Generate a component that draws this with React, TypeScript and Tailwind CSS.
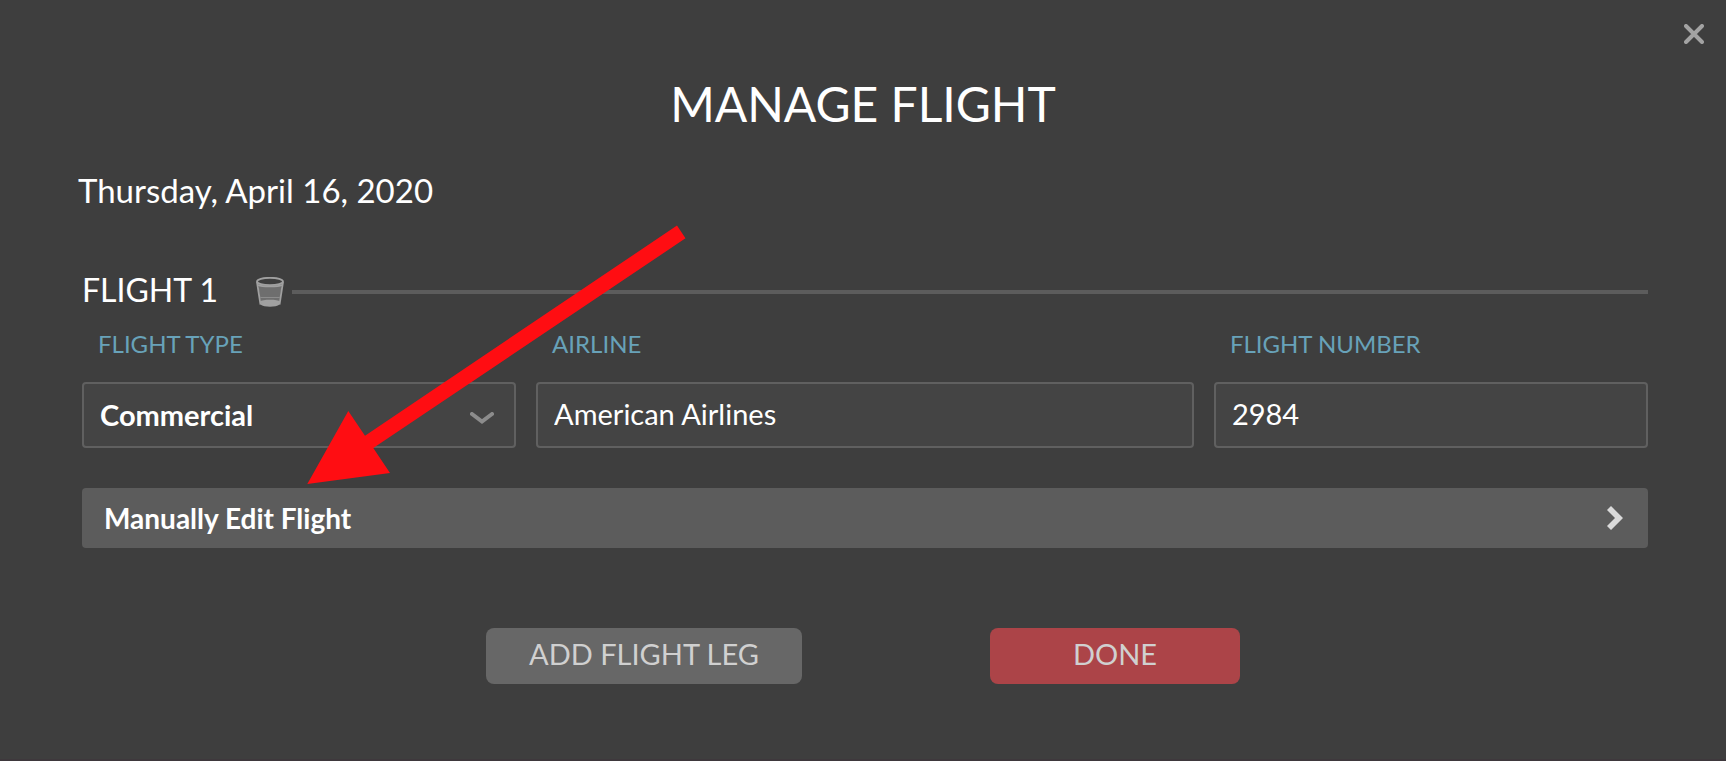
import React, { useState } from 'react';

const fieldClass =
  'h-[66px] w-full rounded border-2 border-[#606060] bg-[#444444] px-4 text-[29px] text-white outline-none';

interface FieldProps {
  id: string;
  label: string;
  children: React.ReactNode;
}

const Field: React.FC<FieldProps> = ({ id, label, children }) => (
  <div className="min-w-0">
    <label htmlFor={id} className="block pl-4 text-[24px] leading-9 text-[#68a2b9]">
      {label}
    </label>
    <div className="relative mt-5">{children}</div>
  </div>
);

const TrashIcon: React.FC = () => (
  <svg width="28" height="30" viewBox="0 0 28 30" fill="none">
    <path d="M2 7 L26 7 L23 27 L5 27 Z" fill="#6e6e6e" />
    <path d="M4 24.5 C6 22 22 22 24 24.5 L23.5 27.5 C20 30.5 8 30.5 4.5 27.5 Z" fill="#a0a0a0" />
    <path d="M4.5 20.5 H23.5" stroke="#8c8c8c" />
    <path d="M1 5 L4.5 27.5 M27 5 L23.5 27.5" stroke="#a0a0a0" strokeWidth="1.8" />
    <path d="M2 8 C6 10 22 10 26 8" stroke="#a0a0a0" strokeWidth="1.4" />
    <ellipse cx="14" cy="4.5" rx="13" ry="3.7" fill="#3e3e3e" stroke="#a0a0a0" strokeWidth="1.8" />
  </svg>
);

const PointerArrow: React.FC = () => (
  <svg
    className="pointer-events-none absolute left-[306px] top-[225px]"
    width="380"
    height="260"
    viewBox="306 225 380 260"
  >
    <path d="M677 225.5 L685.5 238.3 L373.3 448 L390 473 L307.3 484 L348.3 411 L365 435.7 Z" fill="#ff0d12" />
  </svg>
);

export default function App() {
  const [flightType, setFlightType] = useState('Commercial');
  const [airline, setAirline] = useState('American Airlines');
  const [flightNumber, setFlightNumber] = useState('2984');

  return (
    <main className="relative flex min-h-screen flex-col border-b-2 border-[#3e383c] bg-[#3e3e3e] px-[78px] pb-[75px] pt-[74px] font-['Lato','Open_Sans',sans-serif] text-white">
      <button type="button" aria-label="Close" className="absolute right-[22px] top-6">
        <svg width="20" height="20" viewBox="0 0 20 20" fill="none" stroke="#a3a3a3" strokeWidth="4" strokeLinecap="round">
          <path d="M2 2 L18 18 M18 2 L2 18" />
        </svg>
      </button>

      <h1 className="text-center text-[48px] leading-[60px]">MANAGE FLIGHT</h1>
      <p className="mt-9 text-[33px] leading-10">Thursday, April 16, 2020</p>

      <section className="mt-[60px] pl-1">
        <div className="flex items-center">
          <h2 className="pb-1 text-[32px] leading-10">FLIGHT 1</h2>
          <button type="button" aria-label="Delete flight" className="ml-[38px]">
            <TrashIcon />
          </button>
          <div className="ml-2 h-1 flex-1 bg-[#5c5c5c]" />
        </div>

        <div className="mt-3 grid grid-cols-[33fr_50fr_33fr] gap-5">
          <Field id="flight-type" label="FLIGHT TYPE">
            <select
              id="flight-type"
              value={flightType}
              onChange={(e) => setFlightType(e.target.value)}
              className={`${fieldClass} appearance-none font-bold`}
            >
              <option>Commercial</option>
              <option>Private</option>
            </select>
            <svg
              className="pointer-events-none absolute right-[22px] top-[30px]"
              width="24"
              height="12"
              viewBox="0 0 24 12"
              fill="none"
              stroke="#8c8c8c"
              strokeWidth="4"
              strokeLinecap="round"
            >
              <path d="M2 2 L12 9.5 L22 2" />
            </svg>
          </Field>
          <Field id="airline" label="AIRLINE">
            <input
              id="airline"
              value={airline}
              onChange={(e) => setAirline(e.target.value)}
              className={`${fieldClass} pb-1`}
            />
          </Field>
          <Field id="flight-number" label="FLIGHT NUMBER">
            <input
              id="flight-number"
              value={flightNumber}
              onChange={(e) => setFlightNumber(e.target.value)}
              className={`${fieldClass} pb-1`}
            />
          </Field>
        </div>

        <button
          type="button"
          className="mt-10 flex h-[60px] w-full items-center justify-between rounded bg-[#5c5c5c] pl-[22px] pr-[25px] text-[28px] font-bold"
        >
          Manually Edit Flight
          <svg width="16" height="24" viewBox="0 0 16 24" fill="#dadada">
            <path d="M4 0 L16 12 L4 24 L0 20 L8 12 L0 4 Z" />
          </svg>
        </button>
      </section>

      <div className="mt-20 flex justify-center gap-[188px] text-[29px] text-[#d0d0d0]">
        <button type="button" className="h-14 w-[316px] rounded-lg bg-[#676767] pb-1">
          ADD FLIGHT LEG
        </button>
        <button type="button" className="h-14 w-[250px] rounded-lg bg-[#ac4448] pb-1">
          DONE
        </button>
      </div>

      <PointerArrow />
    </main>
  );
}
